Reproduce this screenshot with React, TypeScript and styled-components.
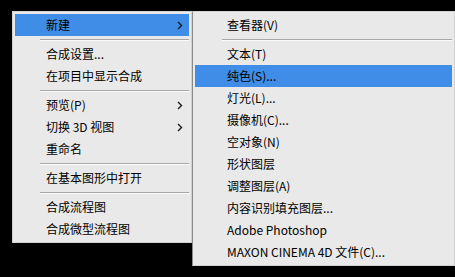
import { FC } from "react";
import styled, { createGlobalStyle } from "styled-components";

const GlobalStyle = createGlobalStyle`
  html, body {
    margin: 0;
    padding: 0;
    background: #000;
    height: 100%;
    overflow: hidden;
  }
  body {
    font-family: "Noto Sans CJK SC", "Noto Sans", sans-serif;
    font-size: 12px;
    color: #000;
  }
`;

type Entry = { label?: string; sub?: boolean; active?: boolean; sep?: boolean };

const mainItems: Entry[] = [
  { label: "新建", sub: true, active: true },
  { sep: true },
  { label: "合成设置..." },
  { label: "在项目中显示合成" },
  { sep: true },
  { label: "预览(P)", sub: true },
  { label: "切换 3D 视图", sub: true },
  { label: "重命名" },
  { sep: true },
  { label: "在基本图形中打开" },
  { sep: true },
  { label: "合成流程图" },
  { label: "合成微型流程图" },
];

const newItems: Entry[] = [
  { label: "查看器(V)" },
  { sep: true },
  { label: "文本(T)" },
  { label: "纯色(S)...", active: true },
  { label: "灯光(L)..." },
  { label: "摄像机(C)..." },
  { label: "空对象(N)" },
  { label: "形状图层" },
  { label: "调整图层(A)" },
  { label: "内容识别填充图层..." },
  { label: "Adobe Photoshop" },
  { label: "MAXON CINEMA 4D 文件(C)..." },
];

const Screen = styled.div`
  display: flex;
  align-items: flex-start;
  padding: 11px 0 0 12px;
`;

const Menu = styled.div<{ $width: number; $edge: string }>`
  width: ${(p) => p.$width}px;
  box-sizing: border-box;
  background: #e9e9e9;
  border: 1px solid #d2d2d2;
  border-left-color: ${(p) => p.$edge};
  padding: 2px 2px;
  display: flex;
  flex-direction: column;
`;

const Row = styled.div<{ $active?: boolean; $indent: number }>`
  height: 22px;
  line-height: 22px;
  display: flex;
  align-items: center;
  justify-content: space-between;
  padding-left: ${(p) => p.$indent}px;
  padding-right: 6px;
  background: ${(p) => (p.$active ? "#3f8de6" : "transparent")};
  white-space: nowrap;
`;

const Separator = styled.div<{ $indent: number }>`
  height: 7px;
  display: flex;
  align-items: center;
  padding-left: ${(p) => p.$indent}px;
  &::after {
    content: "";
    flex: 1;
    height: 0;
    border-top: 1px solid #a7a7a7;
    border-bottom: 1px solid #fbfbfb;
  }
`;

const Chevron = () => (
  <svg width="6" height="9" viewBox="0 0 6 9">
    <path d="M1 1 L4.5 4.5 L1 8" fill="none" stroke="#1a1a1a" strokeWidth="1.4" />
  </svg>
);

const MenuList: FC<{ items: Entry[]; indent: number; sepIndent: number }> = ({
  items,
  indent,
  sepIndent,
}) => (
  <>
    {items.map((it, i) =>
      it.sep ? (
        <Separator key={i} $indent={sepIndent} />
      ) : (
        <Row key={i} $active={it.active} $indent={indent}>
          <span>{it.label}</span>
          {it.sub && <Chevron />}
        </Row>
      )
    )}
  </>
);

export default function App() {
  return (
    <>
      <GlobalStyle />
      <Screen>
        <Menu $width={180} $edge="#d2d2d2">
          <MenuList items={mainItems} indent={31} sepIndent={25} />
        </Menu>
        <Menu $width={263} $edge="#8a8a8a">
          <MenuList items={newItems} indent={32} sepIndent={27} />
        </Menu>
      </Screen>
    </>
  );
}
